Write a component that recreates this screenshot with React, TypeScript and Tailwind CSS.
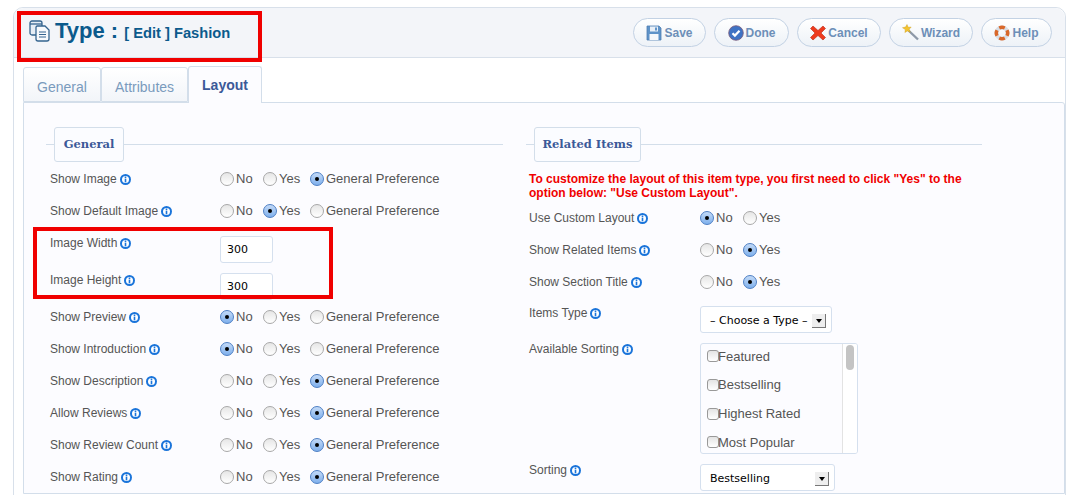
const sans = "font-['Liberation_Sans',Arial,sans-serif]";

function InfoIcon() {
  return (
    <svg width="11" height="11" viewBox="0 0 11 11" className="ml-[3px] shrink-0">
      <circle cx="5.5" cy="5.5" r="5.5" fill="#1a74da" />
      <circle cx="5.5" cy="5.5" r="3.5" fill="#fff" />
      <rect x="4.7" y="2.5" width="1.6" height="1.5" fill="#1a74da" />
      <rect x="4.7" y="4.6" width="1.6" height="3.7" fill="#1a74da" />
    </svg>
  );
}

function Radio({ checked, label, width }: { checked: boolean; label: string; width: string }) {
  return (
    <span className={`flex items-center ${width}`}>
      {checked ? (
        <span className="flex h-[14px] w-[14px] shrink-0 items-center justify-center rounded-full border border-[#4d7fc4] bg-gradient-to-b from-[#c3daf7] to-[#7fb0ec]">
          <span className="h-[4px] w-[4px] rounded-full bg-black" />
        </span>
      ) : (
        <span className="h-[14px] w-[14px] shrink-0 rounded-full border border-[#a8a8a8] bg-gradient-to-b from-[#e6e6e6] to-white" />
      )}
      <span className="ml-[2px] whitespace-nowrap text-[13px] text-[#555]">{label}</span>
    </span>
  );
}

function Options({ value, pref = true }: { value: string; pref?: boolean }) {
  return (
    <div className="flex h-full items-center">
      <Radio checked={value === "No"} label="No" width="w-[43px]" />
      <Radio checked={value === "Yes"} label="Yes" width="w-[47px]" />
      {pref && <Radio checked={value === "Pref"} label="General Preference" width="w-[130px]" />}
    </div>
  );
}

function Label({ text, width }: { text: string; width: string }) {
  return (
    <div className={`flex h-4 shrink-0 items-center whitespace-nowrap text-[12px] text-[#555] ${width}`}>
      {text}
      <InfoIcon />
    </div>
  );
}

function RadioRow({ text, value, pref = true, width }: { text: string; value: string; pref?: boolean; width: string }) {
  return (
    <div className="flex h-8 items-center">
      <Label text={text} width={width} />
      <Options value={value} pref={pref} />
    </div>
  );
}

function SizeRow({ text }: { text: string }) {
  return (
    <div className="flex h-[37px] items-start">
      <div className="pt-2">
        <Label text={text} width="w-[170px]" />
      </div>
      <input
        readOnly
        value="300"
        className="mt-[9px] h-[27px] w-[53px] rounded-[3px] border border-[#d5e0ee] bg-white px-[6px] font-['DejaVu_Sans',sans-serif] text-[11px] text-black"
      />
    </div>
  );
}

function Legend({ text, width }: { text: string; width: string }) {
  return (
    <div className="mb-px flex h-[35px] items-center">
      <div className="h-px w-2 bg-[#d3deea]" />
      <div className={`flex h-[35px] items-center justify-center rounded-[3px] border border-[#d3deea] bg-[#fbfcff] font-['DejaVu_Serif',serif] text-[11.5px] font-bold text-[#3b5998] ${width}`}>
        {text}
      </div>
      <div className="h-px flex-1 bg-[#d3deea]" />
    </div>
  );
}

function SelectBox({ text, width }: { text: string; width: string }) {
  return (
    <div className={`flex h-[27px] items-center justify-between rounded-[3px] border border-[#d5e0ee] bg-white pl-[9px] pr-[5px] pt-[3px] font-['DejaVu_Sans',sans-serif] text-[11px] text-black ${width}`}>
      <span className="whitespace-nowrap">{text}</span>
      <span className="flex h-[14px] w-[14px] items-center justify-center border-r border-b border-[#777] bg-[#eee]">
        <span className="h-0 w-0 border-x-[3px] border-t-[4px] border-x-transparent border-t-black" />
      </span>
    </div>
  );
}

function SortItem({ text }: { text: string }) {
  return (
    <div className="flex h-[28.7px] items-center">
      <span className="h-[12px] w-[12px] shrink-0 rounded-[3px] border border-[#999] bg-gradient-to-b from-[#e4e4e4] to-white" />
      <span className="-ml-px text-[13px] text-[#555]">{text}</span>
    </div>
  );
}

function SaveIcon() {
  return (
    <svg width="16" height="16" viewBox="0 0 16 16">
      <path d="M1 1h12l2 2v12H1z" fill="#5f93c8" stroke="#4f7fb2" strokeWidth="0.8" />
      <rect x="4" y="1.5" width="8" height="5" fill="#e8eff7" />
      <rect x="9" y="2.5" width="2" height="3" fill="#5f93c8" />
      <rect x="3.5" y="9" width="9" height="6" fill="#f6f8fb" />
    </svg>
  );
}

function DoneIcon() {
  return (
    <svg width="16" height="16" viewBox="0 0 16 16">
      <circle cx="8" cy="8" r="7.3" fill="#3f73c4" stroke="#7a5a78" strokeWidth="0.8" />
      <path d="M4.5 8.2l2.4 2.4 4.6-4.8" fill="none" stroke="#fff" strokeWidth="2.2" />
    </svg>
  );
}

function CancelIcon() {
  return (
    <svg width="16" height="16" viewBox="0 0 16 16">
      <path d="M3 1l5 4.500L13 1l2.500 2.500L11 8l4.500 4.500L13 15l-5-4.500L3 15 .5 12.500 5 8 .5 3.500z" fill="#ee3b1e" stroke="#b92a12" strokeWidth="0.6" />
    </svg>
  );
}

function WizardIcon() {
  return (
    <svg width="17" height="17" viewBox="0 0 17 17">
      <path d="M6 6l10 9.500" stroke="#8d99a8" strokeWidth="2.400" />
      <path d="M5 .5l1.200 2.800 3-.3-2 2.300 1 2.900-2.800-1.300-2.500 1.700.4-3L.5 3.700l3-.6z" fill="#f4c430" stroke="#c99a1a" strokeWidth="0.4" />
    </svg>
  );
}

function HelpIcon() {
  return (
    <svg width="16" height="16" viewBox="0 0 16 16">
      <circle cx="8" cy="8" r="5.500" fill="none" stroke="#d8dde4" strokeWidth="4" />
      <path d="M4.500 1.500a7 7 0 0 1 7 0L10 4.600a4 4 0 0 0-4 0zM14.500 4.500a7 7 0 0 1 0 7L11.400 10a4 4 0 0 0 0-4zM11.500 14.500a7 7 0 0 1-7 0L6 11.400a4 4 0 0 0 4 0zM1.500 11.500a7 7 0 0 1 0-7L4.600 6a4 4 0 0 0 0 4z" fill="#d9682a" />
    </svg>
  );
}

function ToolButton({ text, width, icon }: { text: string; width: string; icon: React.ReactNode }) {
  return (
    <div className={`flex h-[29px] items-center justify-center gap-[2px] rounded-full border border-[#c3d2e4] bg-gradient-to-b from-white to-[#edf2f7] text-[12px] font-bold text-[#6d8fb8] ${width}`}>
      {icon}
      <span>{text}</span>
    </div>
  );
}

function PageIcon() {
  return (
    <svg width="21" height="22" viewBox="0 0 21 22" fill="none" stroke="#35648f" strokeWidth="1.300">
      <rect x="1" y="1" width="12" height="14" rx="2" fill="#e6edf5" />
      <path d="M1 4h12" />
      <path d="M8 6h8l4 4v9a2 2 0 0 1-2 2H9a2 2 0 0 1-2-2V7z" fill="#f7f9fc" />
      <path d="M10 12h7M10 14.500h7M10 17h7" strokeWidth="1.100" />
    </svg>
  );
}

function Tab({ text, active, width }: { text: string; active?: boolean; width: string }) {
  if (active) {
    return (
      <div className={`relative z-10 -mt-[2px] -mb-px flex h-[37px] items-center justify-center rounded-t-[3px] border border-b-0 border-[#d3deea] bg-[#fcfcff] text-[14px] font-bold text-[#3b5998] ${width}`}>
        {text}
      </div>
    );
  }
  return (
    <div className={`flex h-[35px] items-center justify-center rounded-t-[3px] border border-[#d3deea] bg-gradient-to-b from-white to-[#f2f5f9] pt-[6px] text-[14px] text-[#7a9bbd] ${width}`}>
      {text}
    </div>
  );
}

export default function App() {
  const w = "w-[170px]";
  const rw = "w-[171px]";
  return (
    <div className={`relative h-[495px] w-[1073px] overflow-hidden bg-white pl-[13px] pr-[7px] pt-[7px] ${sans}`}>
      <div className="h-[520px] rounded-t-[10px] border border-[#d8e0ea] bg-white">
        {/* title bar */}
        <div className="flex h-[50px] items-center justify-between rounded-t-[10px] border-b border-[#d8e0ea] bg-[#f3f5f9] pl-[15px] pr-[13px]">
          <div className="flex -translate-y-[2px] items-center">
            <PageIcon />
            <span className="ml-[5px] text-[22px] font-bold leading-none text-[#0b5a8c]">Type :</span>
            <span className="ml-[6px] mt-[6px] text-[14.7px] font-bold leading-none text-[#0b5a8c]">[ Edit ] Fashion</span>
          </div>
          <div className="flex gap-2">
            <ToolButton text="Save" width="w-[73px]" icon={<SaveIcon />} />
            <ToolButton text="Done" width="w-[75px]" icon={<DoneIcon />} />
            <ToolButton text="Cancel" width="w-[84px]" icon={<CancelIcon />} />
            <ToolButton text="Wizard" width="w-[84px]" icon={<WizardIcon />} />
            <ToolButton text="Help" width="w-[71px]" icon={<HelpIcon />} />
          </div>
        </div>

        {/* tabs */}
        <div className="ml-[9px] mt-[9px]">
          <div className="flex h-[35px] items-end">
            <Tab text="General" width="w-[78px]" />
            <Tab text="Attributes" width="w-[87px]" />
            <Tab text="Layout" active width="w-[74px]" />
          </div>
          <div className="flex rounded-tr-[3px] border border-[#d3deea] bg-[#fcfcff] pl-[22px] pt-[24px]">
            {/* left column */}
            <div className="w-[457px]">
              <Legend text="General" width="w-[70px]" />
              <div className="pl-1">
                <RadioRow text="Show Image" value="Pref" width={w} />
                <RadioRow text="Show Default Image" value="Yes" width={w} />
                <SizeRow text="Image Width" />
                <SizeRow text="Image Height" />
                <RadioRow text="Show Preview" value="No" width={w} />
                <RadioRow text="Show Introduction" value="No" width={w} />
                <RadioRow text="Show Description" value="Pref" width={w} />
                <RadioRow text="Allow Reviews" value="Pref" width={w} />
                <RadioRow text="Show Review Count" value="Pref" width={w} />
                <RadioRow text="Show Rating" value="Pref" width={w} />
              </div>
            </div>

            {/* right column */}
            <div className="ml-[23px] w-[456px]">
              <Legend text="Related Items" width="w-[107px]" />
              <div className="pl-[3px]">
                <p className="mt-[10px] h-[30px] w-[450px] text-[12px] font-bold leading-[14px] text-[#f00000]">
                  To customize the layout of this item type, you first need to click "Yes" to the option below: "Use Custom Layout".
                </p>
                <RadioRow text="Use Custom Layout" value="No" pref={false} width={rw} />
                <RadioRow text="Show Related Items" value="Yes" pref={false} width={rw} />
                <RadioRow text="Show Section Title" value="Yes" pref={false} width={rw} />
                <div className="flex h-[39px] items-start">
                  <div className="pt-[7px]">
                    <Label text="Items Type" width={rw} />
                  </div>
                  <div className="mt-[8px]">
                    <SelectBox text="– Choose a Type –" width="w-[132px]" />
                  </div>
                </div>
                <div className="flex h-[121px] items-start">
                  <div className="pt-1">
                    <Label text="Available Sorting" width={rw} />
                  </div>
                  <div className="mt-[6px] flex h-[111px] w-[158px] overflow-hidden rounded-[3px] border border-[#d5e0ee] bg-[#fcfcff]">
                    <div className="-mt-[2px] flex-1 pl-[6px]">
                      <SortItem text="Featured" />
                      <SortItem text="Bestselling" />
                      <SortItem text="Highest Rated" />
                      <SortItem text="Most Popular" />
                    </div>
                    <div className="w-[15px] border-l border-[#e3e3e3] bg-white px-[3px] pt-px">
                      <div className="h-[25px] rounded-full bg-[#c4c4c4]" />
                    </div>
                  </div>
                </div>
                <div className="flex items-start">
                  <div className="pt-1">
                    <Label text="Sorting" width={rw} />
                  </div>
                  <div className="mt-[6px]">
                    <SelectBox text="Bestselling" width="w-[135px]" />
                  </div>
                </div>
              </div>
            </div>
          </div>
        </div>
      </div>

      {/* red annotation boxes drawn over the screenshot */}
      <div className="absolute left-[17px] top-[11px] h-[51px] w-[245px] border-[4px] border-[#f00000]" />
      <div className="absolute left-[33px] top-[227px] h-[72px] w-[300px] border-[4px] border-[#f00000]" />
    </div>
  );
}
